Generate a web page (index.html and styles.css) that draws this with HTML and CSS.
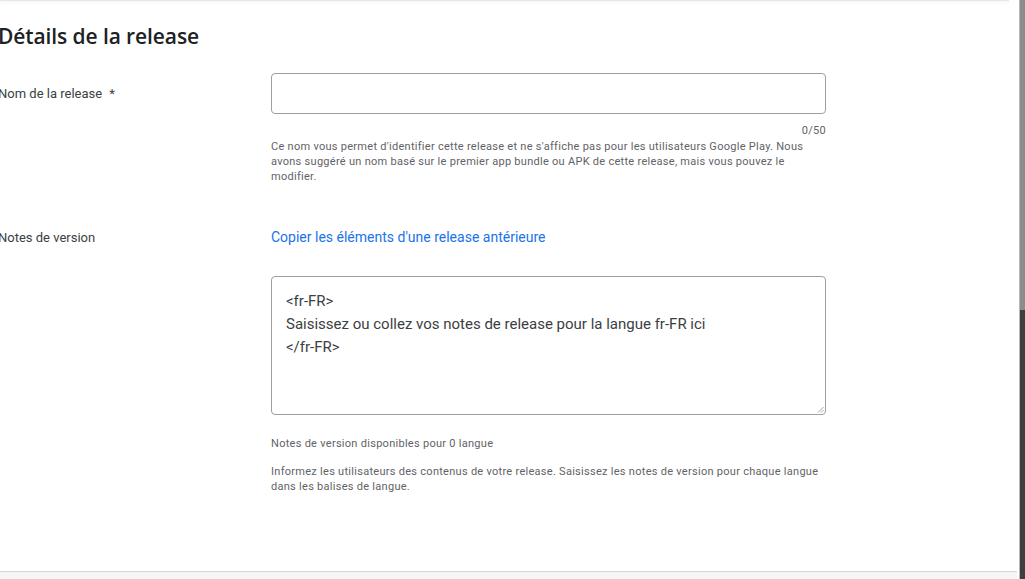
FILE: index.html
```html
<!DOCTYPE html>
<html lang="fr">
<head>
<meta charset="utf-8">
<title>Détails de la release</title>
<link rel="stylesheet" href="styles.css">
</head>
<body>
<div class="window">
  <div class="main">
    <div class="topedge"></div>
    <div class="content">
      <h1 class="title">Détails de la release</h1>

      <div class="row row-name">
        <div class="label">Nom de la release <span class="req">*</span></div>
        <div class="field">
          <div class="input"></div>
          <div class="counter">0/50</div>
          <p class="help">Ce nom vous permet d'identifier cette release et ne s'affiche pas pour les utilisateurs Google Play. Nous avons suggéré un nom basé sur le premier app bundle ou APK de cette release, mais vous pouvez le modifier.</p>
        </div>
      </div>

      <div class="row row-notes">
        <div class="label">Notes de version</div>
        <div class="field">
          <a class="link" href="#">Copier les éléments d'une release antérieure</a>
          <div class="textarea">
            <div>&lt;fr-FR&gt;</div>
            <div>Saisissez ou collez vos notes de release pour la langue fr-FR ici</div>
            <div>&lt;/fr-FR&gt;</div>
            <svg class="grip" width="7" height="7" viewBox="0 0 7 7"><path d="M6.5 1 L1 6.5 M6.5 4 L4 6.5" stroke="#8a8a8a" stroke-width="0.8" fill="none"/></svg>
          </div>
          <p class="help avail">Notes de version disponibles pour 0 langue</p>
          <p class="help">Informez les utilisateurs des contenus de votre release. Saisissez les notes de version pour chaque langue dans les balises de langue.</p>
        </div>
      </div>
    </div>
    <div class="footer"></div>
  </div>
  <div class="scrollbar">
    <div class="track"></div>
    <div class="thumb"></div>
  </div>
</div>
</body>
</html>
```

FILE: styles.css
```css
html, body {
  margin: 0;
  padding: 0;
  background: #ffffff;
}
body {
  font-family: Roboto, "Liberation Sans", Arial, sans-serif;
  color: #3c4043;
  overflow: hidden;
}
.window {
  display: flex;
  width: 1025px;
  height: 579px;
}
.main {
  flex: 1;
  display: flex;
  flex-direction: column;
  padding-right: 2px;
}
.topedge {
  height: 1px;
  background: #e6e6e6;
  box-shadow: 0 1px 4px rgba(0, 0, 0, 0.14);
  margin-right: 8px;
}
.content {
  flex: 1;
  margin-left: -2px;
}
.title {
  margin: 21px 0 0 0;
  font-family: "Open Sans", Roboto, sans-serif;
  font-weight: 600;
  font-size: 21px;
  line-height: 28px;
  color: #202124;
  letter-spacing: -0.1px;
}
.row {
  display: grid;
  grid-template-columns: 273px 555px;
}
.row-name {
  margin-top: 23px;
}
.label {
  font-size: 13px;
  color: #3c4043;
  line-height: 20px;
}
.row-name .label {
  padding-top: 11px;
}
.req {
  margin-left: 4px;
}
.input {
  height: 39px;
  border: 1px solid #9aa0a6;
  border-radius: 4px;
}
.counter {
  text-align: right;
  font-size: 11px;
  line-height: 14px;
  color: #5f6368;
  margin-top: 10px;
  letter-spacing: 0.3px;
}
.help {
  margin: 1px 0 0 0;
  font-size: 11px;
  line-height: 15px;
  color: #5f6368;
  letter-spacing: 0.28px;
}
.row-notes {
  margin-top: 43px;
}
.row-notes .label {
  padding-top: 1px;
}
.link {
  display: block;
  font-size: 14px;
  font-weight: 400;
  line-height: 20px;
  color: #1a73e8;
  text-decoration: none;
}
.textarea {
  position: relative;
  margin-top: 29px;
  height: 120px;
  border: 1px solid #9aa0a6;
  border-radius: 4px;
  padding: 13px 14px 4px 14px;
  font-size: 15px;
  line-height: 23px;
  color: #3c4043;
}
.grip {
  position: absolute;
  right: 1px;
  bottom: 1px;
}
.help.avail {
  margin-top: 21px;
}
.help.avail + .help {
  margin-top: 13px;
}
.footer {
  height: 7px;
  border-top: 1px solid #d6d6d6;
  background: #f6f6f6;
}
.scrollbar {
  width: 5px;
  display: flex;
  flex-direction: column;
  border-left: 1px solid #b8b8b8;
}
.track {
  height: 310px;
  background: #8c8c8c;
}
.thumb {
  flex: 1;
  background: #3e3e3e;
}
```
